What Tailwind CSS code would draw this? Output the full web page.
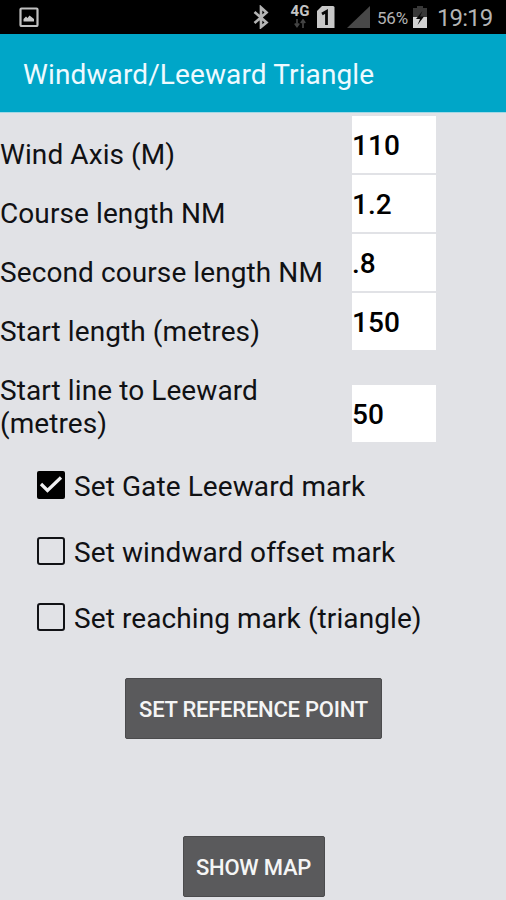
<!DOCTYPE html>
<html lang="en">
<head>
<meta charset="utf-8">
<title>Windward/Leeward Triangle</title>
<script src="https://cdn.jsdelivr.net/npm/@tailwindcss/browser@4"></script>
</head>
<body class="w-[506px] h-[900px] overflow-hidden bg-[#e1e2e6] font-['Roboto',sans-serif] text-[28px] leading-[33px] tracking-[0.09px] text-[#101114]">
<header class="h-[34px] bg-black flex items-start text-[#b4b4b4]">
  <svg class="ml-[19px] mt-[7px] w-5 h-5 shrink-0" viewBox="0 0 20 20"><rect x="1.5" y="1.5" width="17" height="17.5" rx="1" fill="none" stroke="#c0c0c0" stroke-width="2.2"/><path d="M4.500 14.500V12L7 9.500L8.500 11L10.500 8.500L12.500 10L15 12V14.500Z" fill="#c8c8c8"/></svg>
  <svg class="ml-[214px] mt-[5px] w-4 h-6 shrink-0" viewBox="0 0 16 24"><path d="M1.500 7L13.500 17.500L8 22V2.500L13.500 7.500L1.500 18" fill="none" stroke="#b4b4b4" stroke-width="2.700"/></svg>
  <div class="ml-[20px] mt-[4px] w-[22px] flex flex-col items-center shrink-0">
    <span class="text-[15px] leading-[15px] font-bold text-[#c4c4c4]">4G</span>
    <svg class="w-3 h-[9px]" viewBox="0 0 12 9"><path d="M3 0V7M0.800 4.500L3 7.500L5.200 4.500M9 9V2M6.800 4L9 1L11.200 4" fill="none" stroke="#444" stroke-width="1.700"/></svg>
  </div>
  <svg class="ml-[6px] mt-[6px] w-[18px] h-[23px] shrink-0" viewBox="0 0 18 23"><path d="M0 5L5 0H16Q17.500 0 17.500 1.500V22H0Z" fill="#c8c8c8"/><path d="M5 8L9.500 5.500V19" fill="none" stroke="#080808" stroke-width="2.800"/></svg>
  <svg class="ml-[12px] mt-[6px] w-[24px] h-[23px] shrink-0" viewBox="0 0 24 23"><path d="M0 22L23 0V22Z" fill="#484848"/></svg>
  <span class="ml-[6px] mt-[8px] w-[33px] text-[17px] leading-5 tracking-[-0.2px] shrink-0">56%</span>
  <svg class="ml-[2px] mt-[5px] w-[16px] h-6 shrink-0" viewBox="0 0 16 24"><path d="M1 3H5V1H11V3H15V12H1Z" fill="#383838"/><path d="M1 12H15V23H1Z" fill="#d2d2d2"/><path d="M10.500 6L4 14H8L5.500 20L12 11.500H8Z" fill="#080808"/></svg>
  <span class="ml-[9px] mt-[4px] text-[24px] leading-7 tracking-[-0.9px]">19:19</span>
</header>
<div class="h-[79px] bg-[#00a6c8] border-b border-[#a3d8e5] pt-[24px] pl-[23px] text-[#eefaff] tracking-[0.12px] whitespace-nowrap"><h1>Windward/Leeward Triangle</h1></div>
<main>
  <div class="mt-[3px] grid grid-cols-[352px_84px] auto-rows-[57px] gap-y-[2px] whitespace-nowrap">
    <label class="pt-[22px]">Wind Axis (M)</label><div class="bg-white text-black font-medium pt-[13px]">110</div>
    <label class="pt-[22px]">Course length NM</label><div class="bg-white text-black font-medium pt-[13px]">1.2</div>
    <label class="pt-[22px]">Second course length NM</label><div class="bg-white text-black font-medium pt-[13px]">.8</div>
    <label class="pt-[22px]">Start length (metres)</label><div class="bg-white text-black font-medium pt-[13px]">150</div>
  </div>
  <div class="mt-[24px] flex items-end h-[68px]">
    <label class="w-[352px] h-[68px]">Start line to Leeward<br>(metres)</label>
    <div class="w-[84px] h-[57px] bg-white text-black font-medium pt-[13px]">50</div>
  </div>
  <div class="mt-[28px] pl-[37px] flex flex-col gap-[33px] whitespace-nowrap">
    <label class="h-[33px] flex items-start gap-[9px]"><svg class="mt-px w-7 h-7 shrink-0" viewBox="0 0 28 28"><rect width="28" height="28" rx="2" fill="#000"/><path d="M4 13L10.500 19.500L24 6.500" fill="none" stroke="#f0f0f2" stroke-width="3.200"/></svg><span>Set Gate Leeward mark</span></label>
    <label class="h-[33px] flex items-start gap-[9px]"><span class="mt-px w-7 h-7 shrink-0 border-2 border-[#111216] rounded-[3px]"></span><span>Set windward offset mark</span></label>
    <label class="h-[33px] flex items-start gap-[9px]"><span class="mt-px w-7 h-7 shrink-0 border-2 border-[#111216] rounded-[3px]"></span><span>Set reaching mark (triangle)</span></label>
  </div>
  <div class="mt-[43px] pl-px flex flex-col items-center gap-[97px] text-[22px] leading-[26px] tracking-[-0.24px] font-medium text-[#f5f5f5] whitespace-nowrap">
    <button class="w-[257px] h-[61px] pt-[2px] bg-[#5a5a5c] border border-[#4b4b4d] rounded-[2px]">SET REFERENCE POINT</button>
    <button class="w-[142px] h-[61px] pt-[2px] bg-[#5a5a5c] border border-[#4b4b4d] rounded-[2px]">SHOW MAP</button>
  </div>
</main>
</body>
</html>
